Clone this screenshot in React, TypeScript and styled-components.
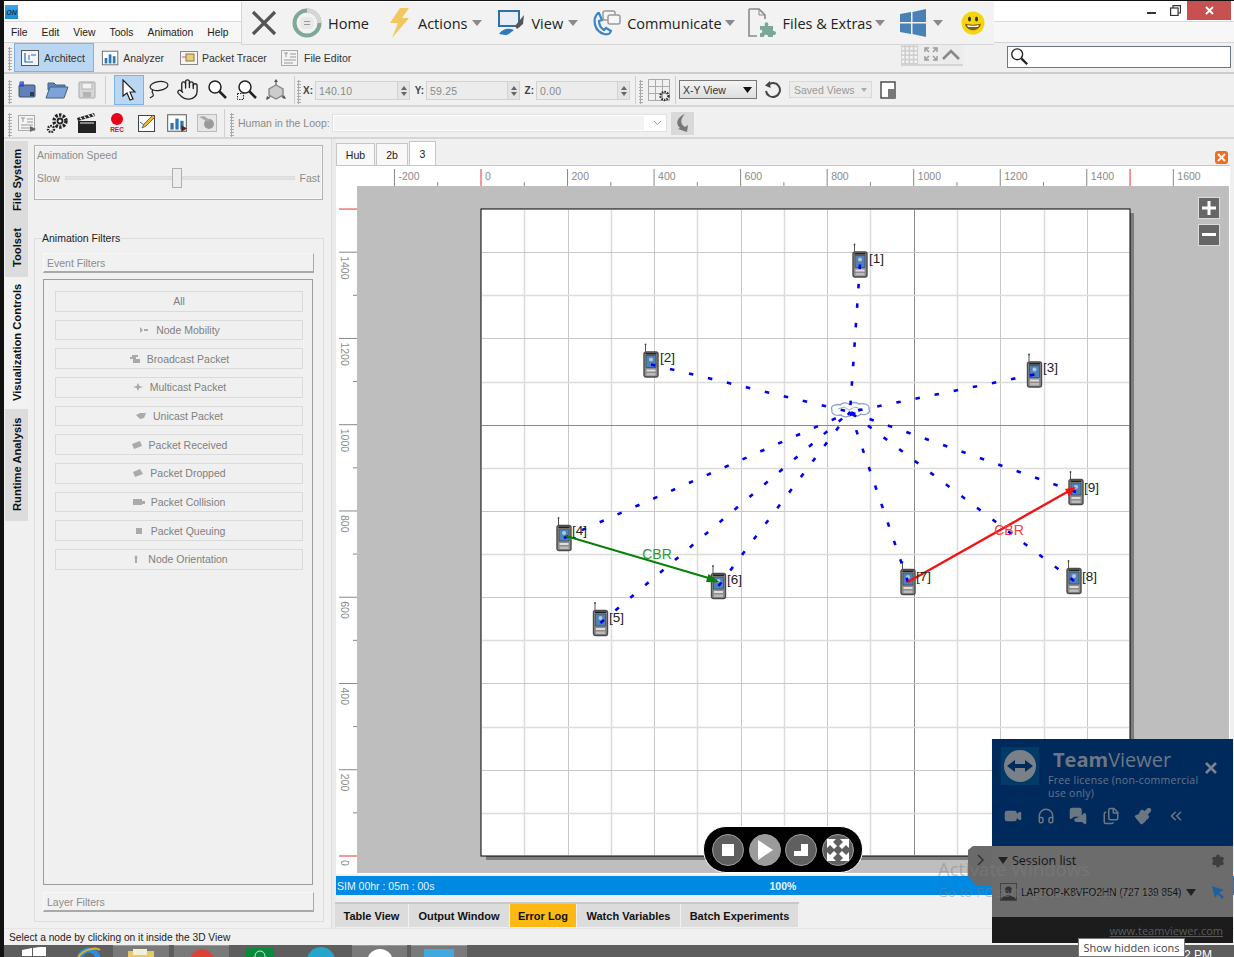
import React from "react";
import styled, { createGlobalStyle } from "styled-components";
import { Hand, Video, Headphones, MessagesSquare, Files as FilesIcon, Paintbrush, ChevronsLeft, Settings } from "lucide-react";

const Global = createGlobalStyle`
  html, body { margin: 0; padding: 0; width: 1234px; height: 957px; overflow: hidden; background: #111; }
  * { box-sizing: border-box; }
  #root { width: 1234px; height: 957px; }
  fieldset { min-width: 0; }
`;

const UI = `"Liberation Sans", Arial, sans-serif`;
const HEAD = `"Open Sans", "Noto Sans", sans-serif`;

const Page = styled.div`
  position: relative; width: 1234px; height: 957px; padding: 1px 0 0 4px; background: #111; overflow: hidden;
  font: 11px ${UI}; color: #222;
`;
const Win = styled.div`display: flex; flex-direction: column; height: 956px; background: #f0f0f0;`;

const TitleBar = styled.div`height: 21px; flex: none; background: #fff; display: flex; align-items: flex-start; padding-left: 1px; border-bottom: 1px solid #d9d9d9;`;
const AppLogo = styled.div`
  width: 13px; height: 14px; margin-top: 4px; background: linear-gradient(#39a7e8, #1f8ad0); color: #10365a;
  font: italic bold 7px ${UI}; display: flex; align-items: center; justify-content: center;
`;
const WinBtns = styled.div`margin-left: auto; display: flex; align-items: flex-start; padding-right: 3px; gap: 0;`;
const WinBtn = styled.div<{ $close?: boolean; $w: number }>`
  width: ${p => p.$w}px; height: 19px; display: flex; align-items: center; justify-content: center;
  background: ${p => (p.$close ? "#c75050" : "transparent")}; color: ${p => (p.$close ? "#fff" : "#333")};
`;

const MenuBar = styled.div`height: 21px; flex: none; background: #f7f7f7; display: flex; align-items: center; gap: 14px; padding-left: 7px; border-bottom: 1px solid #d4d4d4;`;
const MenuItem = styled.span`font-size: 10.3px; color: #222;`;

const ModeBar = styled.div`height: 31px; flex: none; display: flex; align-items: flex-start; padding-left: 4px; border-bottom: 2px solid #cdcdcd; position: relative;`;
const Grip = styled.div`width: 4px; height: 24px; margin-top: 4px; flex: none; background-image: radial-gradient(#aaa 1px, transparent 1.1px); background-size: 3px 3px;`;
const ModeBtn = styled.div<{ $on?: boolean; $ml?: number; $w: number }>`
  width: ${p => p.$w}px; height: 29px; flex: none; margin-left: ${p => p.$ml ?? 0}px; display: flex; align-items: center; gap: 4px; padding-left: 5px;
  font-size: 10.5px; color: #333; background: ${p => (p.$on ? "#b9d7f2" : "transparent")};
  border: 1px solid ${p => (p.$on ? "#7fb2e3" : "transparent")};
`;
const CollapseWidget = styled.div`margin-left: auto; display: flex; align-items: center; height: 23px; width: 62px; background: #ececec; border-bottom: 2px solid #d5d5d5;`;
const DotsTile = styled.div`width: 17px; height: 23px; background-color: #cfcfcf; background-image: radial-gradient(#f4f4f4 1.3px, transparent 1.4px); background-size: 4.2px 4.4px;`;
const SearchBox = styled.div`width: 224px; height: 22px; margin: 3px 3px 0 44px; background: #fff; border: 1px solid #6d7680; display: flex; align-items: center; padding-left: 1px;`;

const ToolRow = styled.div<{ $h: number; $pt?: number }>`height: ${p => p.$h}px; flex: none; display: flex; align-items: center; padding: ${p => p.$pt ?? 0}px 0 0 4px; border-bottom: 2px solid #d6d6d6;`;
const IconBtn = styled.div<{ $w?: number; $on?: boolean }>`
  width: ${p => p.$w ?? 30}px; height: 30px; flex: none; display: flex; align-items: center; justify-content: center;
  background: ${p => (p.$on ? "#b9d7f2" : "transparent")}; border: 1px solid ${p => (p.$on ? "#7fb2e3" : "transparent")};
`;
const Sep = styled.div<{ $l: number; $r: number }>`width: 1px; height: 28px; flex: none; margin: 0 ${p => p.$r}px 0 ${p => p.$l}px; background: #cfcfcf;`;
const CoordLabel = styled.label<{ $w: number }>`width: ${p => p.$w}px; flex: none; font-weight: bold; font-size: 10px; color: #444; text-align: right; padding-right: 2px; margin-top: 2px;`;
const Spin = styled.div<{ $w: number }>`width: ${p => p.$w}px; height: 19px; flex: none; margin-top: 2px; display: flex; background: #ececec; border: 1px solid #d2d2d2;`;
const SpinValue = styled.span`flex: 1; padding: 3px 0 0 3px; font-size: 10.5px; color: #8a8a8a; letter-spacing: .2px;`;
const SpinArrows = styled.div`width: 12px; display: flex; flex-direction: column; align-items: center; justify-content: center; gap: 2px; background: #e4e4e4; border-left: 1px solid #d2d2d2;`;
const ArrUp = styled.i`width: 0; height: 0; border: 3px solid transparent; border-top: 0; border-bottom: 4px solid #666;`;
const ArrDn = styled.i`width: 0; height: 0; border: 3px solid transparent; border-bottom: 0; border-top: 4px solid #666;`;
const Select = styled.div`width: 78px; height: 19px; flex: none; margin-left: 3px; display: flex; align-items: center; justify-content: space-between; padding: 0 4px 0 3px; font-size: 10.5px; color: #333; background: linear-gradient(#f4f4f4, #dedede); border: 1px solid #777;`;
const SavedViews = styled.div`width: 83px; height: 17px; flex: none; margin-left: 8px; display: flex; align-items: center; justify-content: space-between; padding: 0 4px; font-size: 10.5px; color: #999; border: 1px solid #d9d9d9; background: #ececec;`;
const GreyCaret = styled.i`width: 0; height: 0; border: 3.5px solid transparent; border-bottom: 0; border-top: 4px solid #aaa;`;
const HitlLabel = styled.span`width: 90px; flex: none; margin-left: 4px; color: #8a8a8a; font-size: 10.5px; white-space: nowrap;`;
const HitlCombo = styled.div`width: 335px; height: 18px; flex: none; margin-left: 4px; display: flex; align-items: center; justify-content: space-between; background: #fff; border: 1px solid #e0e0e0; padding: 1px 4px 1px 1px;`;
const HitlFill = styled.div`width: 310px; height: 14px; background: #f2f2f2;`;
const HitlBtn = styled.div`width: 23px; height: 23px; flex: none; margin-left: 4px; background: #d9d9d9; display: flex; align-items: center; justify-content: center;`;

const Main = styled.div`flex: 1; min-height: 0; display: flex;`;
const VTabs = styled.div`width: 24px; flex: none; padding: 2px 0 0 1px; display: flex; flex-direction: column;`;
const VTab = styled.div<{ $h: number; $on?: boolean }>`
  height: ${p => p.$h}px; padding-top: 1px; writing-mode: vertical-rl; transform: rotate(180deg); display: flex; align-items: center; justify-content: center;
  font: bold 11.2px ${UI}; color: #111; background: ${p => (p.$on ? "#f2f2f2" : "#dcdcdc")}; white-space: nowrap;
`;
const LeftPanel = styled.div`width: 304px; flex: none; padding: 6px 0 0 6px; border-right: 1px solid #dcdcdc;`;
const SpeedBox = styled.div`width: 289px; height: 55px; border: 1px solid #b3b3b3; box-shadow: inset 0 0 0 1px #f8f8f8; padding: 3px 2px 0 2px; color: #8c8c8c; font-size: 10.5px;`;
const SpeedRow = styled.div`display: flex; align-items: center; gap: 5px; margin-top: 11px;`;
const Track = styled.div`flex: 1; height: 4px; background: #e2e2e2; border: 1px solid #dcdcdc; position: relative;`;
const Thumb = styled.div`position: absolute; left: 106px; top: -9px; width: 10px; height: 20px; background: #ededed; border: 1px solid #aeaeae;`;
const Group = styled.fieldset`width: 290px; height: 691px; margin: 31px 0 0 0; padding: 8px 8px 0 8px; border: 1px solid #dddddd; display: block;`;
const Legend = styled.legend`margin-left: -1px; padding: 0; font-size: 10.5px; color: #222; line-height: 14px; height: 14px;`;
const SectionBar = styled.div<{ $mt?: number }>`width: 271px; height: 20px; margin-top: ${p => p.$mt ?? 0}px; display: flex; align-items: center; padding: 1px 0 0 3px; color: #8c8c8c; font-size: 10.5px; background: #f1f1f1; border: 1px solid #f8f8f8; border-bottom: 2px solid #a9a9a9; border-right: 1px solid #a9a9a9;`;
const FilterBox = styled.div`width: 270px; height: 606px; margin-top: 6px; border: 1px solid #9c9c9c; padding: 11px 9px 0 11px; display: flex; flex-direction: column; gap: 8px;`;
const FilterBtn = styled.div`height: 20.67px; flex: none; display: flex; align-items: center; justify-content: center; gap: 6px; color: #808080; font-size: 10.5px; background: #f0f0f0; border: 1px solid #dadada;`;

const Splitter = styled.div`width: 4px; flex: none; background: #ebebeb;`;
const RightPanel = styled.div`flex: 1; min-width: 0; display: flex; flex-direction: column;`;
const TabRow = styled.div`height: 26px; flex: none; display: flex; align-items: flex-end; gap: 1px; padding-right: 6px;`;
const DocTab = styled.div<{ $w: number; $on?: boolean }>`
  width: ${p => p.$w}px; height: ${p => (p.$on ? 24 : 22)}px; display: flex; align-items: center; justify-content: center; font-size: 10.5px; color: #222;
  background: ${p => (p.$on ? "#fff" : "#f8f8f8")}; border: 1px solid #c6c6c6; border-bottom: 0;
`;
const CloseTile = styled.div`margin: 0 0 1px auto; width: 13px; height: 13px; border-radius: 3px; background: #f26a1b; display: flex; align-items: center; justify-content: center;`;
const CanvasFrame = styled.div`width: 894px; height: 709px; flex: none; background: #fff; border-top: 1px solid #c6c6c6; display: flex; flex-direction: column; position: relative;`;
const CanvasRow = styled.div`flex: 1; display: flex; min-height: 0;`;
const Stage = styled.div`width: 872px; height: 687px; background: #bebebe; position: relative;`;
const ZoomStack = styled.div`position: absolute; left: 841px; top: 11px; display: flex; flex-direction: column; gap: 5px;`;
const ZoomBtn = styled.div`width: 22px; height: 22px; background: #666; border: 1px solid #dcdcdc; display: flex; align-items: center; justify-content: center; color: #fff;`;
const Pill = styled.div`position: absolute; left: 346px; top: 640px; width: 160px; height: 47px; background: #000; border: 1px solid #fff; border-radius: 23px; display: flex; align-items: center; justify-content: center; gap: 4.5px;`;
const RoundBtn = styled.div<{ $lit?: boolean }>`width: 32px; height: 32px; border-radius: 50%; background: ${p => (p.$lit ? "#9b9b9b" : "#5f5f5f")}; border: 1.5px solid #9d9d9d; display: flex; align-items: center; justify-content: center;`;

const ProgressBar = styled.div`height: 19px; flex: none; margin-top: 2px; background: #0089e3; color: #e8f4ff; font-size: 10.5px; display: flex; align-items: center; padding-left: 1px; position: relative;`;
const ProgressPct = styled.span`margin-left: 335px; font-weight: bold;`;
const BottomTabs = styled.div`margin: 7px 0 0 -1px; width: 464px; height: 25px; flex: none; display: flex; gap: 1px; border-top: 2px solid #c9c9c9;`;
const BottomTab = styled.div<{ $w: number; $on?: boolean }>`
  width: ${p => p.$w}px; display: flex; align-items: center; justify-content: center; font: bold 11px ${UI}; color: #111;
  background: ${p => (p.$on ? "#fdb913" : "#dcdcdc")};
`;
const StatusLine = styled.div`height: 17px; flex: none; padding: 3px 0 0 5px; font-size: 10.2px; color: #222; background: #f0f0f0; border-top: 1px solid #e4e4e4;`;
const Taskbar = styled.div`height: 12px; flex: none; background: #5e5e5e; display: flex; overflow: hidden; color: #fff;`;
const TaskSlot = styled.div<{ $w: number; $ml?: number; $on?: boolean }>`
  width: ${p => p.$w}px; height: 30px; flex: none; margin-left: ${p => p.$ml ?? 0}px; display: flex; justify-content: center; padding-top: 2px;
  background: ${p => (p.$on ? "#7a7a7a" : "transparent")}; border-top: ${p => (p.$on ? "1px solid #9a9a9a" : "0")};
`;
const Clock = styled.div`margin-left: auto; padding: 3px 22px 0 0; font-size: 12px; color: #fff;`;

const TVPanel = styled.div`position: absolute; left: 992px; top: 739px; width: 241px; height: 204px; display: flex; flex-direction: column; color: #666;`;
const TVTop = styled.div`height: 107px; flex: none; background: #002a5c; padding: 8px 0 0 9px; position: relative;`;
const TVHead = styled.div`display: flex; gap: 8px;`;
const TVLogo = styled.div`width: 38px; height: 38px; flex: none; background: #003a66; display: flex; align-items: center; justify-content: center;`;
const TVBrand = styled.div`font: 20px/26px ${HEAD}; color: #6d7784; margin-left: 6px; white-space: nowrap; b { font-weight: 700; }`;
const TVSmall = styled.div`font: 10.5px/13px ${HEAD}; color: #64758a; margin: 1px 0 0 1px; white-space: nowrap; letter-spacing: .25px;`;
const TVClose = styled.div`position: absolute; left: 213px; top: 23px; color: #7a8490;`;
const TVIcons = styled.div`display: flex; margin: 7px 0 0 3px; gap: 14.6px; color: #6d7784;`;
const TVMid = styled.div`height: 71px; flex: none; background: #6c6c6c; padding: 6px 8px 0 6px; color: #111;`;
const TVRow = styled.div<{ $mt?: number }>`display: flex; align-items: center; margin-top: ${p => p.$mt ?? 0}px;`;
const TVTitle = styled.span`font: 12.5px ${HEAD}; margin-left: 4px; color: #141414;`;
const TVDown = styled.i`width: 0; height: 0; border: 5px solid transparent; border-bottom: 0; border-top: 7px solid #222;`;
const TVAvatar = styled.div`width: 17px; height: 18px; flex: none; border: 1px solid #444; margin-left: 2px; display: flex; align-items: flex-end; justify-content: center; overflow: hidden;`;
const TVHost = styled.span`font: 10px ${UI}; margin-left: 4px; color: #111; white-space: nowrap;`;
const TVFoot = styled.div`flex: 1; background: #1c1c1c; display: flex; justify-content: flex-end; align-items: center; padding-right: 10px; font: 11px ${HEAD}; color: #5c5c5c; text-decoration: underline;`;
const TVFlap = styled.div`position: absolute; left: -24px; top: 107px; width: 24px; height: 39px; background: #6a6a6a; clip-path: polygon(5px 0, 100% 0, 100% 100%, 8px 100%, 0 30px, 0 4px); display: flex; padding: 8px 0 0 9px; color: #333;`;
const Watermark = styled.div`position: absolute; left: 938px; top: 858px; color: rgba(130,130,130,.45); font: 18.5px/22px ${HEAD}; white-space: nowrap; pointer-events: none;`;
const WatermarkSub = styled.div`font-size: 13.5px; line-height: 22px; margin-top: 1px;`;
const Tooltip = styled.div`position: absolute; left: 1078px; top: 938px; width: 107px; height: 19px; background: #fff; border: 1px solid #777; font: 11px ${HEAD}; color: #444; display: flex; align-items: center; justify-content: center; white-space: nowrap;`;

const FloatBar = styled.div`position: absolute; left: 241px; top: 2px; width: 753px; height: 43px; background: #f2f2f2; border: 1px solid #d6d6d6; border-width: 0 0 1px 1px; display: flex; align-items: center; font: 14.5px ${HEAD}; color: #222;`;
const FloatText = styled.span<{ $ml: number }>`margin-left: ${p => p.$ml}px; white-space: nowrap;`;
const FloatIcon = styled.div<{ $ml: number }>`margin-left: ${p => p.$ml}px; display: flex; flex: none;`;
const FloatCaret = styled.i<{ $ml: number }>`flex: none; margin-left: ${p => p.$ml}px; width: 0; height: 0; border: 5px solid transparent; border-bottom: 0; border-top: 6px solid #8a8a8a;`;

/* ---------- icons ---------- */
const Folder = () => <svg width="24" height="18" viewBox="0 0 24 18"><path d="M3 2h6l2 2h9v5H3z" fill="#5d83bd" stroke="#4a5f80" /><path d="M5 6h18l-4 11H1z" fill="#7ea3d8" stroke="#4a5f80" /></svg>;
const NewFile = () => <svg width="20" height="20" viewBox="0 0 20 20"><rect x="2" y="5" width="16" height="12" rx="1" fill="#5f81b8" stroke="#3e5270" /><path d="M4 1v6M2 3h5M2 5h5M6 1v6" stroke="#1c3fe0" strokeWidth="1" /><rect x="13" y="12" width="4" height="4" fill="#2b3c57" /></svg>;
const Save = () => <svg width="18" height="18" viewBox="0 0 18 18"><rect x="1" y="1" width="16" height="16" rx="1" fill="#d7d7d7" stroke="#aaa" /><rect x="4" y="2" width="10" height="6" fill="#f2f2f2" stroke="#b5b5b5" /><rect x="5" y="11" width="8" height="5" fill="#b3b3b3" /></svg>;
const Cursor = () => <svg width="16" height="22" viewBox="0 0 16 22"><path d="M2 1v16l4-3 3 7 3-1-3-7h5z" fill="#fff" stroke="#222" strokeWidth="1.2" /></svg>;
const Lasso = () => <svg width="22" height="22" viewBox="0 0 22 22" fill="none" stroke="#222" strokeWidth="1.2"><ellipse cx="12" cy="7" rx="9" ry="4.5" transform="rotate(-8 12 7)" /><path d="M6 11c-3 2 2 4 0 6-1 1-2 1-3 2" /></svg>;
const Zoom = ({ rect, s = 22 }: { rect?: boolean; s?: number }) => <svg width={s} height={s} viewBox="0 0 22 22" fill="none"><circle cx="9" cy="8" r="6" stroke="#222" strokeWidth="1.5" fill="#fff" /><path d="M13.5 12.5L20 19" stroke="#222" strokeWidth="2.5" />{rect && <rect x="1.5" y="14.5" width="6" height="6" stroke="#222" strokeDasharray="1.5 1" />}</svg>;
const Axes = () => <svg width="24" height="24" viewBox="0 0 24 24" fill="none" stroke="#777" strokeWidth="1.4"><path d="M12 2v12M12 14L3 21M12 14l9 6" /><path d="M12 7l7 4v6l-7 4-7-4v-6z" fill="#ccc" stroke="#888" /><path d="M12 1l-2 3h4zM2 22l1-4 3 2zM22 21l-4-1 2-3z" fill="#555" stroke="none" /></svg>;
const TextDoc = ({ play }: { play?: boolean }) => <svg width="20" height="20" viewBox="0 0 20 20"><rect x="1.5" y="2.5" width="16" height="15" fill="#f4f4f4" stroke="#aaa" /><path d="M4 5h4M6 5v4M10 6h6M10 9h6M4 12h12M4 15h9" stroke="#999" />{play && <path d="M13 13l6 3-6 3z" fill="#666" />}</svg>;
const Gears = () => <svg width="24" height="22" viewBox="0 0 24 22"><circle cx="15" cy="9" r="6" fill="none" stroke="#222" strokeWidth="3.4" strokeDasharray="2.4 1.4" /><circle cx="15" cy="9" r="3.4" fill="#222" /><circle cx="15" cy="9" r="1.6" fill="#f0f0f0" /><circle cx="6" cy="17" r="3" fill="none" stroke="#222" strokeWidth="2.4" strokeDasharray="1.6 1" /></svg>;
const Clapper = () => <svg width="22" height="22" viewBox="0 0 22 22"><rect x="2" y="9" width="18" height="12" fill="#222" /><path d="M2 9l17-5-1-3L1 6z" fill="#222" /><path d="M4 5.5l2 2M8 4.5l2 2M12 3l2 2M16 2l2 2M4 11h14" stroke="#eee" strokeWidth="1.2" /></svg>;
const Rec = () => <svg width="22" height="24" viewBox="0 0 22 24"><circle cx="11" cy="8" r="6" fill="#e8001c" /><text x="11" y="21" textAnchor="middle" fontSize="6.5" fontWeight="bold" fontFamily="Liberation Sans" fill="#d01020">REC</text></svg>;
const Pencil = () => <svg width="20" height="20" viewBox="0 0 20 20"><rect x="1.5" y="2.5" width="16" height="16" fill="#fafafa" stroke="#444" /><path d="M5 15l2-4 9-9 2 2-9 9z" fill="#f0b430" stroke="#444" strokeWidth=".7" /><path d="M3 9l4 3" stroke="#2c6fc0" /></svg>;
const Bars = ({ w = 20, dark }: { w?: number; dark?: boolean }) => <svg width={w} height={w} viewBox="0 0 20 20"><rect x="1.5" y="2.5" width="17" height="15" fill="#fff" stroke="#666" /><rect x="4" y="10" width="3" height="6" fill="#2c78b8" /><rect x="8.5" y="6" width="3" height="10" fill="#2c78b8" /><rect x="13" y="8" width="3" height="8" fill="#2c78b8" />{dark && <path d="M14 12l5 3-5 3z" fill="#522" />}</svg>;
const Reel = () => <svg width="22" height="20" viewBox="0 0 22 20"><rect x="1.5" y="1.5" width="19" height="17" fill="#e6e6e6" stroke="#bbb" /><circle cx="13" cy="11" r="5" fill="#9a9a9a" /><path d="M3 4l9 5 2-2-6-4z" fill="#aaa" /></svg>;
const Architect = () => <svg width="20" height="20" viewBox="0 0 20 20" fill="none"><rect x="1.5" y="2.5" width="17" height="15" fill="#f5f5f5" stroke="#555" /><path d="M5 5v9h5M5 14h8M11 7h5" stroke="#1f6fb5" strokeWidth="1.2" /><path d="M9 7v5" stroke="#1f6fb5" /></svg>;
const Tracer = () => <svg width="18" height="16" viewBox="0 0 18 16"><rect x=".5" y="1.5" width="17" height="13" fill="#f4f4f4" stroke="#888" /><rect x="6" y="4" width="8" height="7" fill="#e8cd7c" stroke="#8a7a40" /><path d="M2 7h4" stroke="#d58" /></svg>;
const GridGear = () => <svg width="24" height="24" viewBox="0 0 24 24"><path d="M1.5 1.5h21v21h-21zM8.5 1v22M15.500 1v22M1 8.5h22M1 15.500h22" fill="none" stroke="#aaa" /><circle cx="17.5" cy="18" r="4" fill="none" stroke="#333" strokeWidth="2.4" strokeDasharray="1.6 1" /></svg>;
const Rotate = () => <svg width="18" height="18" viewBox="0 0 18 18" fill="none"><path d="M5 4a7 7 0 1 1-2 6" stroke="#444" strokeWidth="2" /><path d="M7 0L2 4.5 7.5 7z" fill="#444" /></svg>;
const Panes = () => <svg width="16" height="18" viewBox="0 0 16 18"><rect x="1" y="1" width="14" height="16" fill="#fff" stroke="#444" strokeWidth="1.4" /><rect x="8" y="8" width="7" height="9" fill="#777" /></svg>;

const HomeRing = () => <svg width="30" height="30" viewBox="0 0 30 30" fill="none"><circle cx="15" cy="15" r="12.5" stroke="#83a796" strokeWidth="4" /><path d="M15 2.5a12.5 12.5 0 0 1 12.5 12.5" stroke="#d6d6d6" strokeWidth="4" /><rect x="8.5" y="9" width="13" height="12" rx="4" fill="#e8e8e8" /><path d="M12 13.5h6M12 16.5h6" stroke="#999" strokeWidth="1.2" /></svg>;
const Bolt = () => <svg width="23" height="30" viewBox="0 0 23 30"><path d="M13 0h9l-7 10h7L5 30l6-15H3z" fill="#f3c75f" /></svg>;
const ViewIcon = () => <svg width="28" height="30" viewBox="0 0 28 30" fill="none"><rect x="2" y="3" width="20" height="15" stroke="#2f6db0" strokeWidth="2" fill="#e7eef6" /><path d="M18 18l9-11-1 9-6 5z" fill="#555" /><path d="M2 26c4-6 10-6 15-4-3 2-5 5-9 5z" fill="#2f79c0" /></svg>;
const CommIcon = () => <svg width="30" height="30" viewBox="0 0 30 30" fill="none"><path d="M7 5C1 11 3 23 13 26c3 1 6 0 7-3l-5-3-2 2c-3-2-5-6-5-9l3-1-3-7z" fill="none" stroke="#3b86c8" strokeWidth="2.2" /><rect x="12" y="3" width="12" height="9" rx="2" stroke="#9a9a9a" strokeWidth="1.5" fill="#f6f6f6" /><rect x="17" y="7" width="12" height="9" rx="2" stroke="#9a9a9a" strokeWidth="1.5" fill="#f6f6f6" /></svg>;
const FilesIco = () => <svg width="31" height="32" viewBox="0 0 31 32" fill="none"><path d="M2 2h10l6 6v4M2 2v27h8" stroke="#8a8a8a" strokeWidth="1.6" /><path d="M12 2v6h6" stroke="#8a8a8a" /><path d="M13 19h5c-2-5 5-5 3 0h5v5c4-1 4 5 0 4v2h-5c1-3-5-3-4 0h-4v-4c3 1 3-4 0-3z" fill="#7ba795" /></svg>;
const WinLogo = () => <svg width="26" height="28" viewBox="0 0 26 28"><path d="M0 5l11-2v10H0zM12.500 3L26 0v13H12.500zM0 14.500h11V25L0 23zM12.500 14.500H26V28l-13.500-3z" fill="#4a80b8" /></svg>;
const Smile = () => <svg width="24" height="24" viewBox="0 0 24 24"><circle cx="12" cy="12" r="11.500" fill="#f5d50f" /><ellipse cx="8.500" cy="8" rx="1.500" ry="2.500" fill="#333" /><ellipse cx="15.500" cy="8" rx="1.500" ry="2.500" fill="#333" /><path d="M4 12.500c3 1.500 13 1.500 16 0-1 9-15 9-16 0z" fill="#8a5a10" /><path d="M6 14c3 1 9 1 12 0l-1 2H7z" fill="#fff" /></svg>;

const Tiny = ({ d }: { d: string }) => <svg width="12" height="10" viewBox="0 0 12 10"><path d={d} fill="#aaa" /></svg>;

const filters: [string, string?][] = [
  ["All"],
  ["Node Mobility", "M2 2l3 3-3 3zM6 4h4v2H6z"],
  ["Broadcast Packet", "M1 3h6v2H1zM3 1h6v2H3zM4 5h7v4H4z"],
  ["Multicast Packet", "M6 1l1.500 3L11 5 7.500 6 6 9 4.500 6 1 5l3.500-1z"],
  ["Unicast Packet", "M1 4l4-2h6L9 7 5 8z"],
  ["Packet Received", "M1 4l8-3 2 5-8 3z"],
  ["Packet Dropped", "M1 4l7-3 3 5-8 3z"],
  ["Packet Collision", "M0 2h9v6H0zM9 4h3v3H9z"],
  ["Packet Queuing", "M3 2h6v6H3z"],
  ["Node Orientation", "M5 4h2v5H5zM6 1l2 3H4z"],
];

/* ---------- rulers and scene ---------- */
const px = (v: number) => 481 + v * 0.4327;
const py = (v: number) => 856 - v * 0.4313;
const range = (a: number, b: number, s: number) => { const r: number[] = []; for (let i = a; i <= b; i += s) r.push(i); return r; };
const rulerText = { fontFamily: "Liberation Sans", fontSize: 10.5, fill: "#8a8a8a" };

const TopRuler = () => (
  <svg width="894" height="20" viewBox="336 166 894 20" style={{ display: "block", flex: "none" }}>
    {range(-200, 1600, 100).map(v => {
      const major = v % 200 === 0;
      const red = v === 0 || v === 1500;
      return <line key={v} x1={px(v)} x2={px(v)} y1={major || red ? 169 : 182} y2={186} stroke={red ? "#e83030" : "#888"} />;
    })}
    {range(-200, 1600, 200).map(v => <text key={v} x={px(v) + 4} y={180} {...rulerText}>{v}</text>)}
  </svg>
);
const LeftRuler = () => (
  <svg width="21" height="687" viewBox="336 186 21 687" style={{ display: "block", flex: "none" }}>
    {range(0, 1500, 100).map(v => {
      const major = v % 200 === 0;
      const red = v === 0 || v === 1500;
      return <line key={v} x1={major || red ? 339 : 353} x2={357} y1={py(v)} y2={py(v)} stroke={red ? "#e83030" : "#888"} />;
    })}
    {range(0, 1400, 200).map(v => <text key={v} transform={`translate(341 ${py(v) + 4}) rotate(90)`} {...rulerText}>{v}</text>)}
  </svg>
);

const nodes = [
  { n: 1, x: 860, y: 264.5, lx: 869, ly: 263 },
  { n: 2, x: 651, y: 364.5, lx: 660, ly: 362 },
  { n: 3, x: 1034.5, y: 374.5, lx: 1043, ly: 372 },
  { n: 4, x: 564, y: 538, lx: 572, ly: 535 },
  { n: 5, x: 600.5, y: 623, lx: 609, ly: 622 },
  { n: 6, x: 718.5, y: 586, lx: 727, ly: 584 },
  { n: 7, x: 908, y: 582, lx: 916, ly: 581 },
  { n: 8, x: 1074, y: 581, lx: 1082, ly: 581 },
  { n: 9, x: 1076, y: 492, lx: 1084, ly: 492 },
];
const HUB = { x: 850, y: 412 };

const Phone = ({ x, y }: { x: number; y: number }) => (
  <g transform={`translate(${x - 7.5} ${y - 13})`}>
    <path d="M2 0v-7" stroke="#555" strokeWidth="1" />
    <circle cx="2" cy="-7" r=".9" fill="#444" />
    <rect x=".5" y=".5" width="14" height="25" rx="2" fill="#8d8d8d" stroke="#4a4a4a" strokeWidth="1.4" />
    <rect x="2" y="1.500" width="11" height="1.500" fill="#222" />
    <rect x="2.500" y="4" width="10" height="12" fill="#4f82b5" stroke="#3a3a3a" strokeWidth=".6" />
    <circle cx="7.500" cy="8" r="2" fill="#b8c8d8" />
    <rect x="3" y="18" width="9" height="2" fill="#ddd" />
    <rect x="3" y="21.500" width="9" height="2.500" fill="#bbb" />
  </g>
);

const Scene = () => (
  <svg width="872" height="687" viewBox="357 186 872 687" style={{ display: "block" }}>
    <rect x="486" y="213" width="648" height="647" fill="#7d7d7d" />
    <rect x="481" y="209" width="649" height="647" fill="#fff" stroke="#000" strokeWidth="1" />
    {range(100, 1400, 100).map(v => <line key={v} x1={Math.round(px(v)) + .5} x2={Math.round(px(v)) + .5} y1={210} y2={855} stroke={v === 1000 ? "#8a8a8a" : v % 200 ? "#dcdcdc" : "#c8c8c8"} strokeWidth={v % 200 ? 1.500 : 1} />)}
    {range(100, 1400, 100).map(v => <line key={v} y1={Math.round(py(v)) + .5} y2={Math.round(py(v)) + .5} x1={482} x2={1129} stroke={v === 1000 ? "#8a8a8a" : v % 200 ? "#dcdcdc" : "#c8c8c8"} strokeWidth={v % 200 ? 1.500 : 1} />)}
    {nodes.map(n => <Phone key={n.n} x={n.x} y={n.y} />)}
    <path d="M832 410c-3-5 6-6 8-5 3-3 7-2 9-1 3-2 8-2 10 0 4-1 11 0 10 5 2 4-4 7-8 5-3 3-7 3-9 1-4 2-8 3-11 0-4 1-10 0-9-5z" fill="#fff" stroke="#8aa0c8" strokeWidth="1.300" />
    <path d="M838 409l6-2 5 3 6-3 6 2" fill="none" stroke="#9cb0d0" strokeWidth="1" />
    {nodes.map(n => <line key={n.n} x1={n.x} y1={n.y} x2={HUB.x} y2={HUB.y} stroke="#0000f0" strokeWidth="2.600" strokeDasharray="4.500 15" />)}
    <line x1="566" y1="536" x2="712" y2="579" stroke="#0a800a" strokeWidth="2" />
    <path d="M720 582.500l-14-.5 2.500-8z" fill="#0a800a" />
    <line x1="908" y1="582" x2="1068" y2="491.500" stroke="#f01414" strokeWidth="2.400" />
    <path d="M1076 487l-7 9.500-4-7.500z" fill="#f01414" />
    <text x="657" y="559" textAnchor="middle" fontFamily="Liberation Sans" fontSize="14" fill="#2e9a2e">CBR</text>
    <text x="1009" y="535" textAnchor="middle" fontFamily="Liberation Sans" fontSize="14" fill="#f04040">CBR</text>
    {nodes.map(n => <text key={n.n} x={n.lx} y={n.ly} fontFamily="Liberation Sans" fontSize="13.500" fill="#222">[{n.n}]</text>)}
  </svg>
);

export default function App() {
  return (
    <Page>
      <Global />
      <Win>
        <TitleBar>
          <AppLogo>ON</AppLogo>
          <WinBtns>
            <WinBtn $w={24}><svg width="9" height="9" viewBox="0 0 9 9"><rect y="6" width="9" height="2" fill="#333" /></svg></WinBtn>
            <WinBtn $w={24}><svg width="11" height="11" viewBox="0 0 11 11" fill="none" stroke="#333" strokeWidth="1.200"><rect x=".6" y="3" width="7.500" height="7.500" /><path d="M3 3V.6h7.500V8H8" /></svg></WinBtn>
            <WinBtn $w={44} $close><svg width="9" height="9" viewBox="0 0 9 9" stroke="#fff" strokeWidth="1.800"><path d="M1 1l7 7M8 1L1 8" /></svg></WinBtn>
          </WinBtns>
        </TitleBar>
        <MenuBar>
          {["File", "Edit", "View", "Tools", "Animation", "Help"].map(m => <MenuItem key={m}>{m}</MenuItem>)}
        </MenuBar>
        <ModeBar>
          <Grip />
          <ModeBtn $on $ml={2} $w={80}><Architect />Architect</ModeBtn>
          <ModeBtn $ml={1} $w={70}><Bars />Analyzer</ModeBtn>
          <ModeBtn $ml={9} $w={96}><Tracer />Packet Tracer</ModeBtn>
          <ModeBtn $ml={4} $w={80}><TextDoc />File Editor</ModeBtn>
          <CollapseWidget>
            <DotsTile />
            <FloatIcon $ml={6}><svg width="14" height="14" viewBox="0 0 14 14" fill="none" stroke="#999" strokeWidth="1.400"><path d="M1 5V1h4M9 1h4v4M13 9v4H9M5 13H1V9M2 2l3 3M12 2L9 5M12 12L9 9M2 12l3-3" /></svg></FloatIcon>
            <FloatIcon $ml={4}><svg width="18" height="12" viewBox="0 0 18 12" fill="none" stroke="#888" strokeWidth="2.600"><path d="M1 11l8-8 8 8" /></svg></FloatIcon>
          </CollapseWidget>
          <SearchBox><Zoom s={20} /></SearchBox>
        </ModeBar>
        <ToolRow $h={33}>
          <Grip />
          <IconBtn><NewFile /></IconBtn>
          <IconBtn><Folder /></IconBtn>
          <IconBtn><Save /></IconBtn>
          <Sep $l={3} $r={8} />
          <IconBtn $w={29.5} $on><Cursor /></IconBtn>
          <IconBtn $w={29.5}><Lasso /></IconBtn>
          <IconBtn $w={29.5}><Hand size={23} color="#222" strokeWidth={1.400} /></IconBtn>
          <IconBtn $w={29.5}><Zoom /></IconBtn>
          <IconBtn $w={29.5}><Zoom rect /></IconBtn>
          <IconBtn $w={29.5}><Axes /></IconBtn>
          <Sep $l={3} $r={2} />
          <Grip />
          <CoordLabel $w={14}>X:</CoordLabel>
          <Spin $w={95}><SpinValue>140.10</SpinValue><SpinArrows><ArrUp /><ArrDn /></SpinArrows></Spin>
          <CoordLabel $w={16}>Y:</CoordLabel>
          <Spin $w={94}><SpinValue>59.25</SpinValue><SpinArrows><ArrUp /><ArrDn /></SpinArrows></Spin>
          <CoordLabel $w={16}>Z:</CoordLabel>
          <Spin $w={94}><SpinValue>0.00</SpinValue><SpinArrows><ArrUp /><ArrDn /></SpinArrows></Spin>
          <Sep $l={5} $r={3} />
          <Grip />
          <FloatIcon $ml={4}><GridGear /></FloatIcon>
          <Sep $l={4} $r={0} />
          <Select>X-Y View<svg width="9" height="6" viewBox="0 0 9 6"><path d="M0 0h9L4.500 6z" fill="#111" /></svg></Select>
          <FloatIcon $ml={6}><Rotate /></FloatIcon>
          <SavedViews>Saved Views<GreyCaret /></SavedViews>
          <FloatIcon $ml={8}><Panes /></FloatIcon>
        </ToolRow>
        <ToolRow $h={32} $pt={2}>
          <Grip />
          <IconBtn><TextDoc play /></IconBtn>
          <IconBtn><Gears /></IconBtn>
          <IconBtn><Clapper /></IconBtn>
          <IconBtn><Rec /></IconBtn>
          <IconBtn><Pencil /></IconBtn>
          <IconBtn><Bars w={22} dark /></IconBtn>
          <IconBtn><Reel /></IconBtn>
          <Sep $l={2} $r={5} />
          <Grip />
          <HitlLabel>Human in the Loop:</HitlLabel>
          <HitlCombo><HitlFill /><svg width="9" height="6" viewBox="0 0 9 6" fill="none" stroke="#999"><path d="M1 1l3.500 3.500L8 1" /></svg></HitlCombo>
          <HitlBtn><svg width="20" height="20" viewBox="0 0 20 20"><path d="M12 1C4 4 2 11 7 15l-2 1 9 3 1-7-3 2C7 11 7 6 12 1z" fill="#777" /></svg></HitlBtn>
        </ToolRow>
        <Main>
          <VTabs>
            <VTab $h={79}>File System</VTab>
            <VTab $h={57}>Toolset</VTab>
            <VTab $h={132} $on>Visualization Controls</VTab>
            <VTab $h={112}>Runtime Analysis</VTab>
          </VTabs>
          <LeftPanel>
            <SpeedBox>
              Animation Speed
              <SpeedRow>Slow<Track><Thumb /></Track>Fast</SpeedRow>
            </SpeedBox>
            <Group>
              <Legend>Animation Filters</Legend>
              <SectionBar>Event Filters</SectionBar>
              <FilterBox>
                {filters.map(([t, d]) => <FilterBtn key={t}>{d && <Tiny d={d} />}{t}</FilterBtn>)}
              </FilterBox>
              <SectionBar $mt={7}>Layer Filters</SectionBar>
            </Group>
          </LeftPanel>
          <Splitter />
          <RightPanel>
            <TabRow>
              <DocTab $w={39}>Hub</DocTab>
              <DocTab $w={32}>2b</DocTab>
              <DocTab $w={27} $on>3</DocTab>
              <CloseTile><svg width="9" height="9" viewBox="0 0 9 9" stroke="#fff" strokeWidth="2"><path d="M1 1l7 7M8 1L1 8" /></svg></CloseTile>
            </TabRow>
            <CanvasFrame>
              <TopRuler />
              <CanvasRow>
                <LeftRuler />
                <Stage>
                  <Scene />
                  <ZoomStack>
                    <ZoomBtn><svg width="14" height="14" viewBox="0 0 14 14"><path d="M5.500 0h3v5.500H14v3H8.500V14h-3V8.500H0v-3h5.500z" fill="#fff" /></svg></ZoomBtn>
                    <ZoomBtn><svg width="14" height="4" viewBox="0 0 14 4"><rect width="14" height="3" fill="#fff" /></svg></ZoomBtn>
                  </ZoomStack>
                  <Pill>
                    <RoundBtn><svg width="12" height="12" viewBox="0 0 12 12"><rect width="12" height="12" fill="#fff" /></svg></RoundBtn>
                    <RoundBtn $lit><svg width="16" height="20" viewBox="0 0 16 20"><path d="M1 0l15 10L1 20z" fill="#fff" /></svg></RoundBtn>
                    <RoundBtn><svg width="14" height="12" viewBox="0 0 14 12"><path d="M0 12V7h7V0h7v12z" fill="#fff" /></svg></RoundBtn>
                    <RoundBtn><svg width="24" height="24" viewBox="0 0 24 24" fill="#fff"><path d="M1 1h9L7 4l4 4-3 3-4-4-3 3zM23 1v9l-3-3-4 4-3-3 4-4-3-3zM23 23h-9l3-3-4-4 3-3 4 4 3-3zM1 23v-9l3 3 4-4 3 3-4 4 3 3z" /></svg></RoundBtn>
                  </Pill>
                </Stage>
              </CanvasRow>
            </CanvasFrame>
            <ProgressBar>SIM 00hr : 05m : 00s<ProgressPct>100%</ProgressPct></ProgressBar>
            <BottomTabs>
              <BottomTab $w={73}>Table View</BottomTab>
              <BottomTab $w={100}>Output Window</BottomTab>
              <BottomTab $w={66} $on>Error Log</BottomTab>
              <BottomTab $w={103}>Watch Variables</BottomTab>
              <BottomTab $w={117}>Batch Experiments</BottomTab>
            </BottomTabs>
          </RightPanel>
        </Main>
        <StatusLine>Select a node by clicking on it inside the 3D View</StatusLine>
        <Taskbar>
          <TaskSlot $w={60}><svg width="24" height="20" viewBox="0 0 24 20"><path d="M0 3l10-2v8H0zM11 1l13-2v10H11z" fill="#fff" /></svg></TaskSlot>
          <TaskSlot $w={49}><svg width="26" height="24" viewBox="0 0 26 24"><circle cx="13" cy="12" r="9" fill="none" stroke="#2a90dc" strokeWidth="5" /><path d="M2 10C8 2 20 0 24 3" stroke="#e8b020" strokeWidth="2" fill="none" /></svg></TaskSlot>
          <TaskSlot $w={56} $on><svg width="28" height="20" viewBox="0 0 28 20"><rect x="1" y="3" width="26" height="16" fill="#e8c767" /><rect x="6" y="1" width="14" height="6" fill="#f4f0d8" /></svg></TaskSlot>
          <TaskSlot $w={55} $ml={5} $on><svg width="26" height="24" viewBox="0 0 26 24"><circle cx="13" cy="13" r="12" fill="#d8443a" /></svg></TaskSlot>
          <TaskSlot $w={61}><svg width="30" height="24" viewBox="0 0 30 24"><rect x="1" y="1" width="28" height="22" fill="#0a8a3c" /><circle cx="15" cy="9" r="5" fill="none" stroke="#cfe8d8" /></svg></TaskSlot>
          <TaskSlot $w={62}><svg width="30" height="24" viewBox="0 0 30 24"><circle cx="15" cy="14" r="14" fill="#25a5c8" /></svg></TaskSlot>
          <TaskSlot $w={55} $on><svg width="30" height="24" viewBox="0 0 30 24"><circle cx="15" cy="14" r="13" fill="#fff" /></svg></TaskSlot>
          <TaskSlot $w={56} $ml={4} $on><svg width="32" height="24" viewBox="0 0 32 24"><rect x="1" y="1" width="30" height="22" fill="#3fa9e0" /></svg></TaskSlot>
          <Clock>2 PM</Clock>
        </Taskbar>
      </Win>

      <FloatBar>
        <FloatIcon $ml={9}><svg width="26" height="26" viewBox="0 0 26 26" stroke="#555" strokeWidth="3.200"><path d="M2 2l22 22M24 2L2 24" /></svg></FloatIcon>
        <FloatIcon $ml={15}><HomeRing /></FloatIcon>
        <FloatText $ml={6}>Home</FloatText>
        <FloatIcon $ml={18}><Bolt /></FloatIcon>
        <FloatText $ml={8}>Actions</FloatText>
        <FloatCaret $ml={5} />
        <FloatIcon $ml={15}><ViewIcon /></FloatIcon>
        <FloatText $ml={6}>View</FloatText>
        <FloatCaret $ml={5} />
        <FloatIcon $ml={13}><CommIcon /></FloatIcon>
        <FloatText $ml={6}>Communicate</FloatText>
        <FloatCaret $ml={3} />
        <FloatIcon $ml={12}><FilesIco /></FloatIcon>
        <FloatText $ml={5}>Files &amp; Extras</FloatText>
        <FloatCaret $ml={3} />
        <FloatIcon $ml={15}><WinLogo /></FloatIcon>
        <FloatCaret $ml={7} />
        <FloatIcon $ml={18}><Smile /></FloatIcon>
      </FloatBar>

      <TVPanel>
        <TVFlap><svg width="8" height="12" viewBox="0 0 8 12" fill="none" stroke="#333" strokeWidth="1.500"><path d="M1 1l5 5-5 5" /></svg></TVFlap>
        <TVTop>
          <TVHead>
            <TVLogo><svg width="34" height="34" viewBox="0 0 34 34"><circle cx="17" cy="17" r="16" fill="#7a8088" /><path d="M4 17l8-6v4h10v-4l8 6-8 6v-4H12v4z" fill="#002a5c" /></svg></TVLogo>
            <div>
              <TVBrand><b>Team</b>Viewer</TVBrand>
              <TVSmall>Free license (non-commercial<br />use only)</TVSmall>
            </div>
          </TVHead>
          <TVClose><svg width="12" height="12" viewBox="0 0 12 12" stroke="currentColor" strokeWidth="2.600"><path d="M1 1l10 10M11 1L1 11" /></svg></TVClose>
          <TVIcons>
            <Video size={18} fill="currentColor" />
            <Headphones size={18} />
            <MessagesSquare size={18} fill="currentColor" />
            <FilesIcon size={18} />
            <Paintbrush size={18} fill="currentColor" />
            <ChevronsLeft size={18} />
          </TVIcons>
        </TVTop>
        <TVMid>
          <TVRow>
            <TVDown />
            <TVTitle>Session list</TVTitle>
            <Settings size={14} color="#3f3f3f" fill="#3f3f3f" style={{ marginLeft: "auto" }} />
          </TVRow>
          <TVRow $mt={14}>
            <TVAvatar><svg width="15" height="16" viewBox="0 0 15 16"><circle cx="7.500" cy="6" r="3.500" fill="#333" /><path d="M0 16c1-6 14-6 15 0z" fill="#333" /></svg></TVAvatar>
            <TVHost>LAPTOP-K8VFO2HN (727 139 854)</TVHost>
            <TVDown style={{ marginLeft: 5 }} />
            <svg style={{ marginLeft: "auto" }} width="14" height="14" viewBox="0 0 14 14"><path d="M1 1l12 4-5 2.500L13 12l-2 2-4.500-5L4 13z" fill="#1f5f9c" /></svg>
          </TVRow>
        </TVMid>
        <TVFoot>www.teamviewer.com</TVFoot>
      </TVPanel>
      <Watermark>Activate Windows<WatermarkSub>Go to PC settings to activate Windows.</WatermarkSub></Watermark>
      <Tooltip>Show hidden icons</Tooltip>
    </Page>
  );
}
